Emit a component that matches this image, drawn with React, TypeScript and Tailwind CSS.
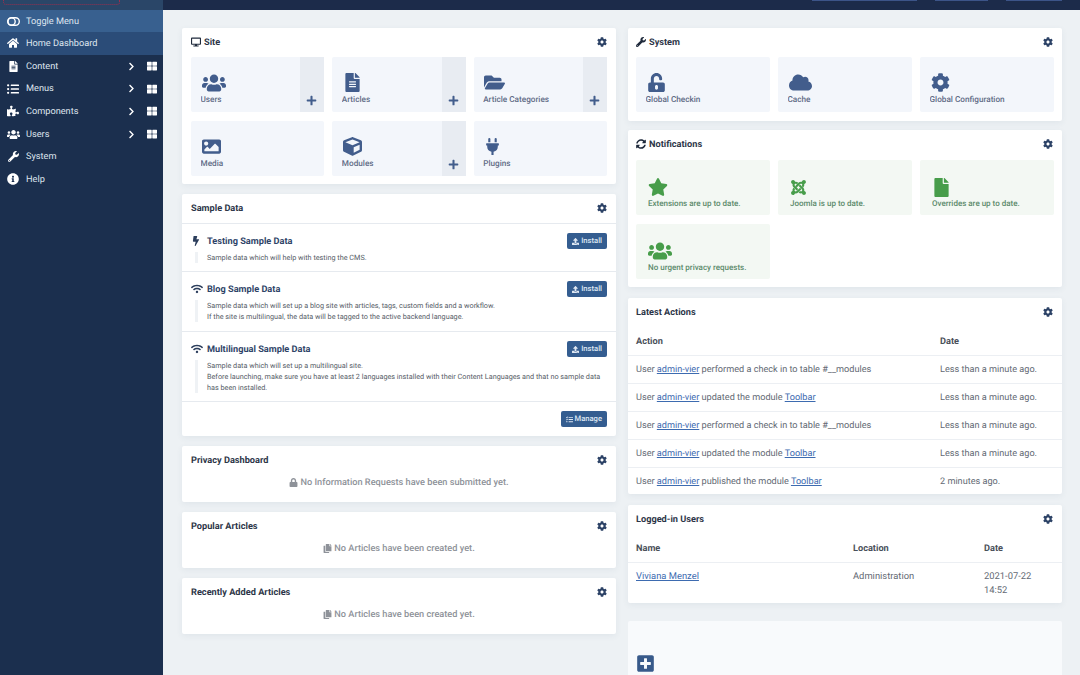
import React from "react";
import type { ReactNode } from "react";
import {
  FaHome, FaFileAlt, FaListUl, FaPuzzlePiece, FaUsers, FaWrench, FaInfoCircle, FaChevronRight, FaThLarge,
  FaDesktop, FaCog, FaPlus, FaFolderOpen, FaImage, FaCube, FaPlug, FaUnlockAlt, FaCloud, FaSyncAlt, FaStar,
  FaJoomla, FaFile, FaBolt, FaWifi, FaUpload, FaTasks, FaLock, FaCopy, FaPlusSquare,
} from "react-icons/fa";

const font = { fontFamily: "Roboto, 'Liberation Sans', sans-serif" };

function NavItem({ icon, label, more, cls = "" }: { icon: ReactNode; label: string; more?: boolean; cls?: string }) {
  return (
    <div className={`flex h-[22.7px] items-center text-[9.2px] text-[#dfe6ef] ${cls}`}>
      <span className="flex w-[26px] shrink-0 justify-center text-[12px] text-white">{icon}</span>
      <span className="mt-[1px] flex-1">{label}</span>
      {more && (
        <>
          <FaChevronRight className="mr-[11px] text-[9px] text-white" />
          <FaThLarge className="mr-[6px] text-[10px] text-white" />
        </>
      )}
    </div>
  );
}

function Card({ title, icon, children, cls = "", right }: { title: string; icon?: ReactNode; children?: ReactNode; cls?: string; right?: boolean }) {
  return (
    <section className={`rounded-[2px] bg-white shadow-[0_2px_6px_rgba(60,80,110,0.07)] ${cls}`}>
      <div className={`flex h-[29px] items-center justify-between pr-[9px] ${right ? "pl-[8px]" : "pl-[9px]"}`}>
        <h2 className="flex items-center gap-[2px] text-[9.2px] font-bold text-[#2d3648]">
          {icon}
          {title}
        </h2>
        <FaCog className="-mt-[1px] text-[10px] text-[#2c4266]" />
      </div>
      {children}
    </section>
  );
}

function Tile({ icon, label, add, green }: { icon: ReactNode; label: string; add?: boolean; green?: boolean }) {
  return (
    <div className={`flex h-[55px] rounded-[2px] ${green ? "bg-[#f3f8f3]" : "bg-[#f3f6fb]"}`}>
      <div className={`flex min-w-0 flex-1 flex-col justify-end ${green ? "pb-[5px] pl-[12px]" : "pb-[6px] pl-[9.5px]"}`}>
        <span className={`flex h-[18px] items-center text-[20px] ${green ? "text-[#479d4a]" : "ml-[1px] text-[#425d8c]"}`}>{icon}</span>
        <span className={`mt-[2px] truncate font-medium ${green ? "text-[8px] text-[#5b8a6b]" : "text-[8.2px] text-[#5f6b85]"}`}>{label}</span>
      </div>
      {add && (
        <div className="flex w-[24px] shrink-0 items-end justify-center bg-[#e8ecf2] pb-[6px] pr-[1px]">
          <FaPlus className="text-[11px] text-[#425d8c]" />
        </div>
      )}
    </div>
  );
}

function Btn({ icon, label }: { icon: ReactNode; label: string }) {
  return (
    <span className="flex h-[16px] items-center gap-[2px] rounded-[2px] bg-[#345d90] px-[5px] text-[7.6px] font-medium text-[#dfe8f3]">
      {icon}
      {label}
    </span>
  );
}

function Sample({ icon, title, lines, cls }: { icon: ReactNode; title: string; lines: string[]; cls: string }) {
  return (
    <div className={`border-t border-[#e6eaef] px-[9px] ${cls}`}>
      <div className="flex items-start justify-between pt-[9px]">
        <div className="flex h-[16px] items-center">
          <span className="flex w-[16px] justify-start text-[10px] text-[#2c3e5c]">{icon}</span>
          <h3 className="mt-[1px] text-[9.2px] font-bold text-[#2f4468]">{title}</h3>
        </div>
        <Btn icon={<FaUpload className="text-[7px]" />} label="Install" />
      </div>
      <div className="ml-[4px] mt-[3px] border-l-[3px] border-[#eff2f5] pl-[9px] text-[7.25px] leading-[11px] text-[#555c66]">
        {lines.map((l) => (
          <p key={l}>{l}</p>
        ))}
      </div>
    </div>
  );
}

function Empty({ icon, text }: { icon: ReactNode; text: string }) {
  return (
    <p className="flex h-[27px] items-start justify-center gap-[2px] pt-[1px] text-[9.2px] font-medium text-[#8e9299]">
      <span className="mt-[2px] text-[9px]">{icon}</span>
      {text}
    </p>
  );
}

const A = ({ children }: { children: ReactNode }) => <a className="text-[#3d6bb0] underline">{children}</a>;

function ActionRow({ children, date }: { children: ReactNode; date: string }) {
  return (
    <div className="grid h-[28px] grid-cols-[304px_1fr] items-center border-t border-[#eceff3] px-[8px] pt-[2px] text-[9.13px] text-[#636a74]">
      <span>{children}</span>
      <span>{date}</span>
    </div>
  );
}

export default function App() {
  return (
    <div style={font} className="flex h-[675px] w-[1080px] overflow-hidden bg-[#edf1f4] antialiased [text-rendering:geometricPrecision]">
      <nav className="w-[163px] shrink-0 bg-[#1b2f4e]">
        <div className="h-[10px] overflow-hidden bg-[#2a4668] pl-[3px]">
          <div className="h-[5px] w-[117px] rounded-b-[3px] border border-t-0 border-dotted border-[#96304f]" />
        </div>
        <NavItem
          cls="bg-[#38608f] !h-[22px]"
          label="Toggle Menu"
          icon={
            <svg width="13" height="9" viewBox="0 0 13 9" fill="none" stroke="currentColor" strokeWidth="1.4">
              <rect x="0.7" y="0.7" width="11.6" height="7.6" rx="3.8" />
              <circle cx="4.6" cy="4.5" r="3.6" />
            </svg>
          }
        />
        <NavItem cls="bg-[#2b4c78]" label="Home Dashboard" icon={<FaHome />} />
        <NavItem label="Content" more icon={<FaFileAlt className="text-[11px]" />} />
        <NavItem label="Menus" more icon={<FaListUl />} />
        <NavItem label="Components" more icon={<FaPuzzlePiece />} />
        <NavItem label="Users" more icon={<FaUsers className="text-[13px]" />} />
        <NavItem label="System" icon={<FaWrench className="text-[11px]" />} />
        <NavItem label="Help" icon={<FaInfoCircle />} />
      </nav>
      <div className="flex min-w-0 flex-1 flex-col">
        <header className="flex h-[10px] shrink-0 justify-end bg-[#1c2b4a]">
          <div className="flex h-px gap-[18px] pr-[18px]">
            <span className="w-[105px] bg-[#3c5488]" />
            <span className="w-[53px] bg-[#3c5488]" />
            <span className="w-[56px] bg-[#3c5488]" />
          </div>
        </header>
        <main className="grid flex-1 grid-cols-[434px_434px] items-start gap-x-[12px] pl-[19px] pt-[18px]">
          <div className="flex flex-col gap-[10px]">
            <Card title="Site" icon={<FaDesktop className="mr-[1px] text-[10px] text-[#1f2a3c]" />} cls="h-[156px]">
              <div className="grid grid-cols-3 gap-x-[8px] gap-y-[9px] px-[9px]">
                <Tile icon={<FaUsers className="text-[24px]" />} label="Users" add />
                <Tile icon={<FaFileAlt className="text-[19px]" />} label="Articles" add />
                <Tile icon={<FaFolderOpen className="text-[21px]" />} label="Article Categories" add />
                <Tile icon={<FaImage className="text-[19px]" />} label="Media" />
                <Tile icon={<FaCube className="text-[19px]" />} label="Modules" add />
                <Tile icon={<FaPlug className="text-[17px]" />} label="Plugins" />
              </div>
            </Card>
            <Card title="Sample Data" cls="h-[242px]">
              <Sample cls="h-[48px]" icon={<FaBolt className="text-[10px]" />} title="Testing Sample Data" lines={["Sample data which will help with testing the CMS."]} />
              <Sample
                cls="h-[60px]"
                icon={<FaWifi className="text-[12px]" />}
                title="Blog Sample Data"
                lines={[
                  "Sample data which will set up a blog site with articles, tags, custom fields and a workflow.",
                  "If the site is multilingual, the data will be tagged to the active backend language.",
                ]}
              />
              <Sample
                cls="h-[70px]"
                icon={<FaWifi className="text-[12px]" />}
                title="Multilingual Sample Data"
                lines={[
                  "Sample data which will set up a multilingual site.",
                  "Before launching, make sure you have at least 2 languages installed with their Content Languages and that no sample data",
                  "has been installed.",
                ]}
              />
              <div className="flex h-[35px] items-center justify-end border-t border-[#e6eaef] pr-[9px]">
                <Btn icon={<FaTasks className="text-[7px]" />} label="Manage" />
              </div>
            </Card>
            <Card title="Privacy Dashboard" cls="h-[56px]">
              <Empty icon={<FaLock />} text="No Information Requests have been submitted yet." />
            </Card>
            <Card title="Popular Articles" cls="h-[56px]">
              <Empty icon={<FaCopy />} text="No Articles have been created yet." />
            </Card>
            <Card title="Recently Added Articles" cls="h-[56px]">
              <Empty icon={<FaCopy />} text="No Articles have been created yet." />
            </Card>
          </div>
          <div className="flex flex-col">
            <Card right title="System" icon={<FaWrench className="mr-[1px] text-[10px] text-[#1f2a3c]" />} cls="h-[93px]">
              <div className="grid grid-cols-3 gap-x-[8px] px-[8px]">
                <Tile icon={<FaUnlockAlt className="text-[19px]" />} label="Global Checkin" />
                <Tile icon={<FaCloud className="text-[23px]" />} label="Cache" />
                <Tile icon={<FaCog className="text-[19px]" />} label="Global Configuration" />
              </div>
            </Card>
            <Card right title="Notifications" icon={<FaSyncAlt className="mr-[1px] text-[10px] text-[#1f2a3c]" />} cls="mt-[9px] h-[157px]">
              <div className="grid grid-cols-3 gap-x-[8px] gap-y-[9px] px-[8px] pt-[1px]">
                <Tile green icon={<FaStar />} label="Extensions are up to date." />
                <Tile green icon={<FaJoomla className="text-[17px]" />} label="Joomla is up to date." />
                <Tile green icon={<FaFile className="text-[19px]" />} label="Overrides are up to date." />
                <Tile green icon={<FaUsers className="text-[24px]" />} label="No urgent privacy requests." />
              </div>
            </Card>
            <Card right title="Latest Actions" cls="mt-[11px] h-[196px]">
              <div className="grid h-[28px] grid-cols-[304px_1fr] items-center px-[8px] pt-[1px] text-[9.2px] font-bold text-[#4a505a]">
                <span>Action</span>
                <span>Date</span>
              </div>
              <ActionRow date="Less than a minute ago.">
                User <A>admin-vier</A> performed a check in to table #__modules
              </ActionRow>
              <ActionRow date="Less than a minute ago.">
                User <A>admin-vier</A> updated the module <A>Toolbar</A>
              </ActionRow>
              <ActionRow date="Less than a minute ago.">
                User <A>admin-vier</A> performed a check in to table #__modules
              </ActionRow>
              <ActionRow date="Less than a minute ago.">
                User <A>admin-vier</A> updated the module <A>Toolbar</A>
              </ActionRow>
              <ActionRow date="2 minutes ago.">
                User <A>admin-vier</A> published the module <A>Toolbar</A>
              </ActionRow>
            </Card>
            <Card right title="Logged-in Users" cls="mt-[11px] h-[98px]">
              <div className="grid h-[28px] grid-cols-[217px_131px_1fr] items-center px-[8px] pt-[1px] text-[9.2px] font-bold text-[#4a505a]">
                <span>Name</span>
                <span>Location</span>
                <span>Date</span>
              </div>
              <div className="grid grid-cols-[217px_131px_1fr] border-t border-[#eceff3] px-[8px] pt-[7px] text-[9.4px] leading-[13.5px] text-[#636a74]">
                <span><A>Viviana Menzel</A></span>
                <span>Administration</span>
                <span>2021-07-22<br />14:52</span>
              </div>
            </Card>
            <div className="mt-[18px] h-[60px] rounded-[2px] bg-[#f8fafc] pl-[8px] pt-[33px]">
              <FaPlusSquare className="text-[19px] text-[#385a8a]" />
            </div>
          </div>
        </main>
      </div>
    </div>
  );
}
